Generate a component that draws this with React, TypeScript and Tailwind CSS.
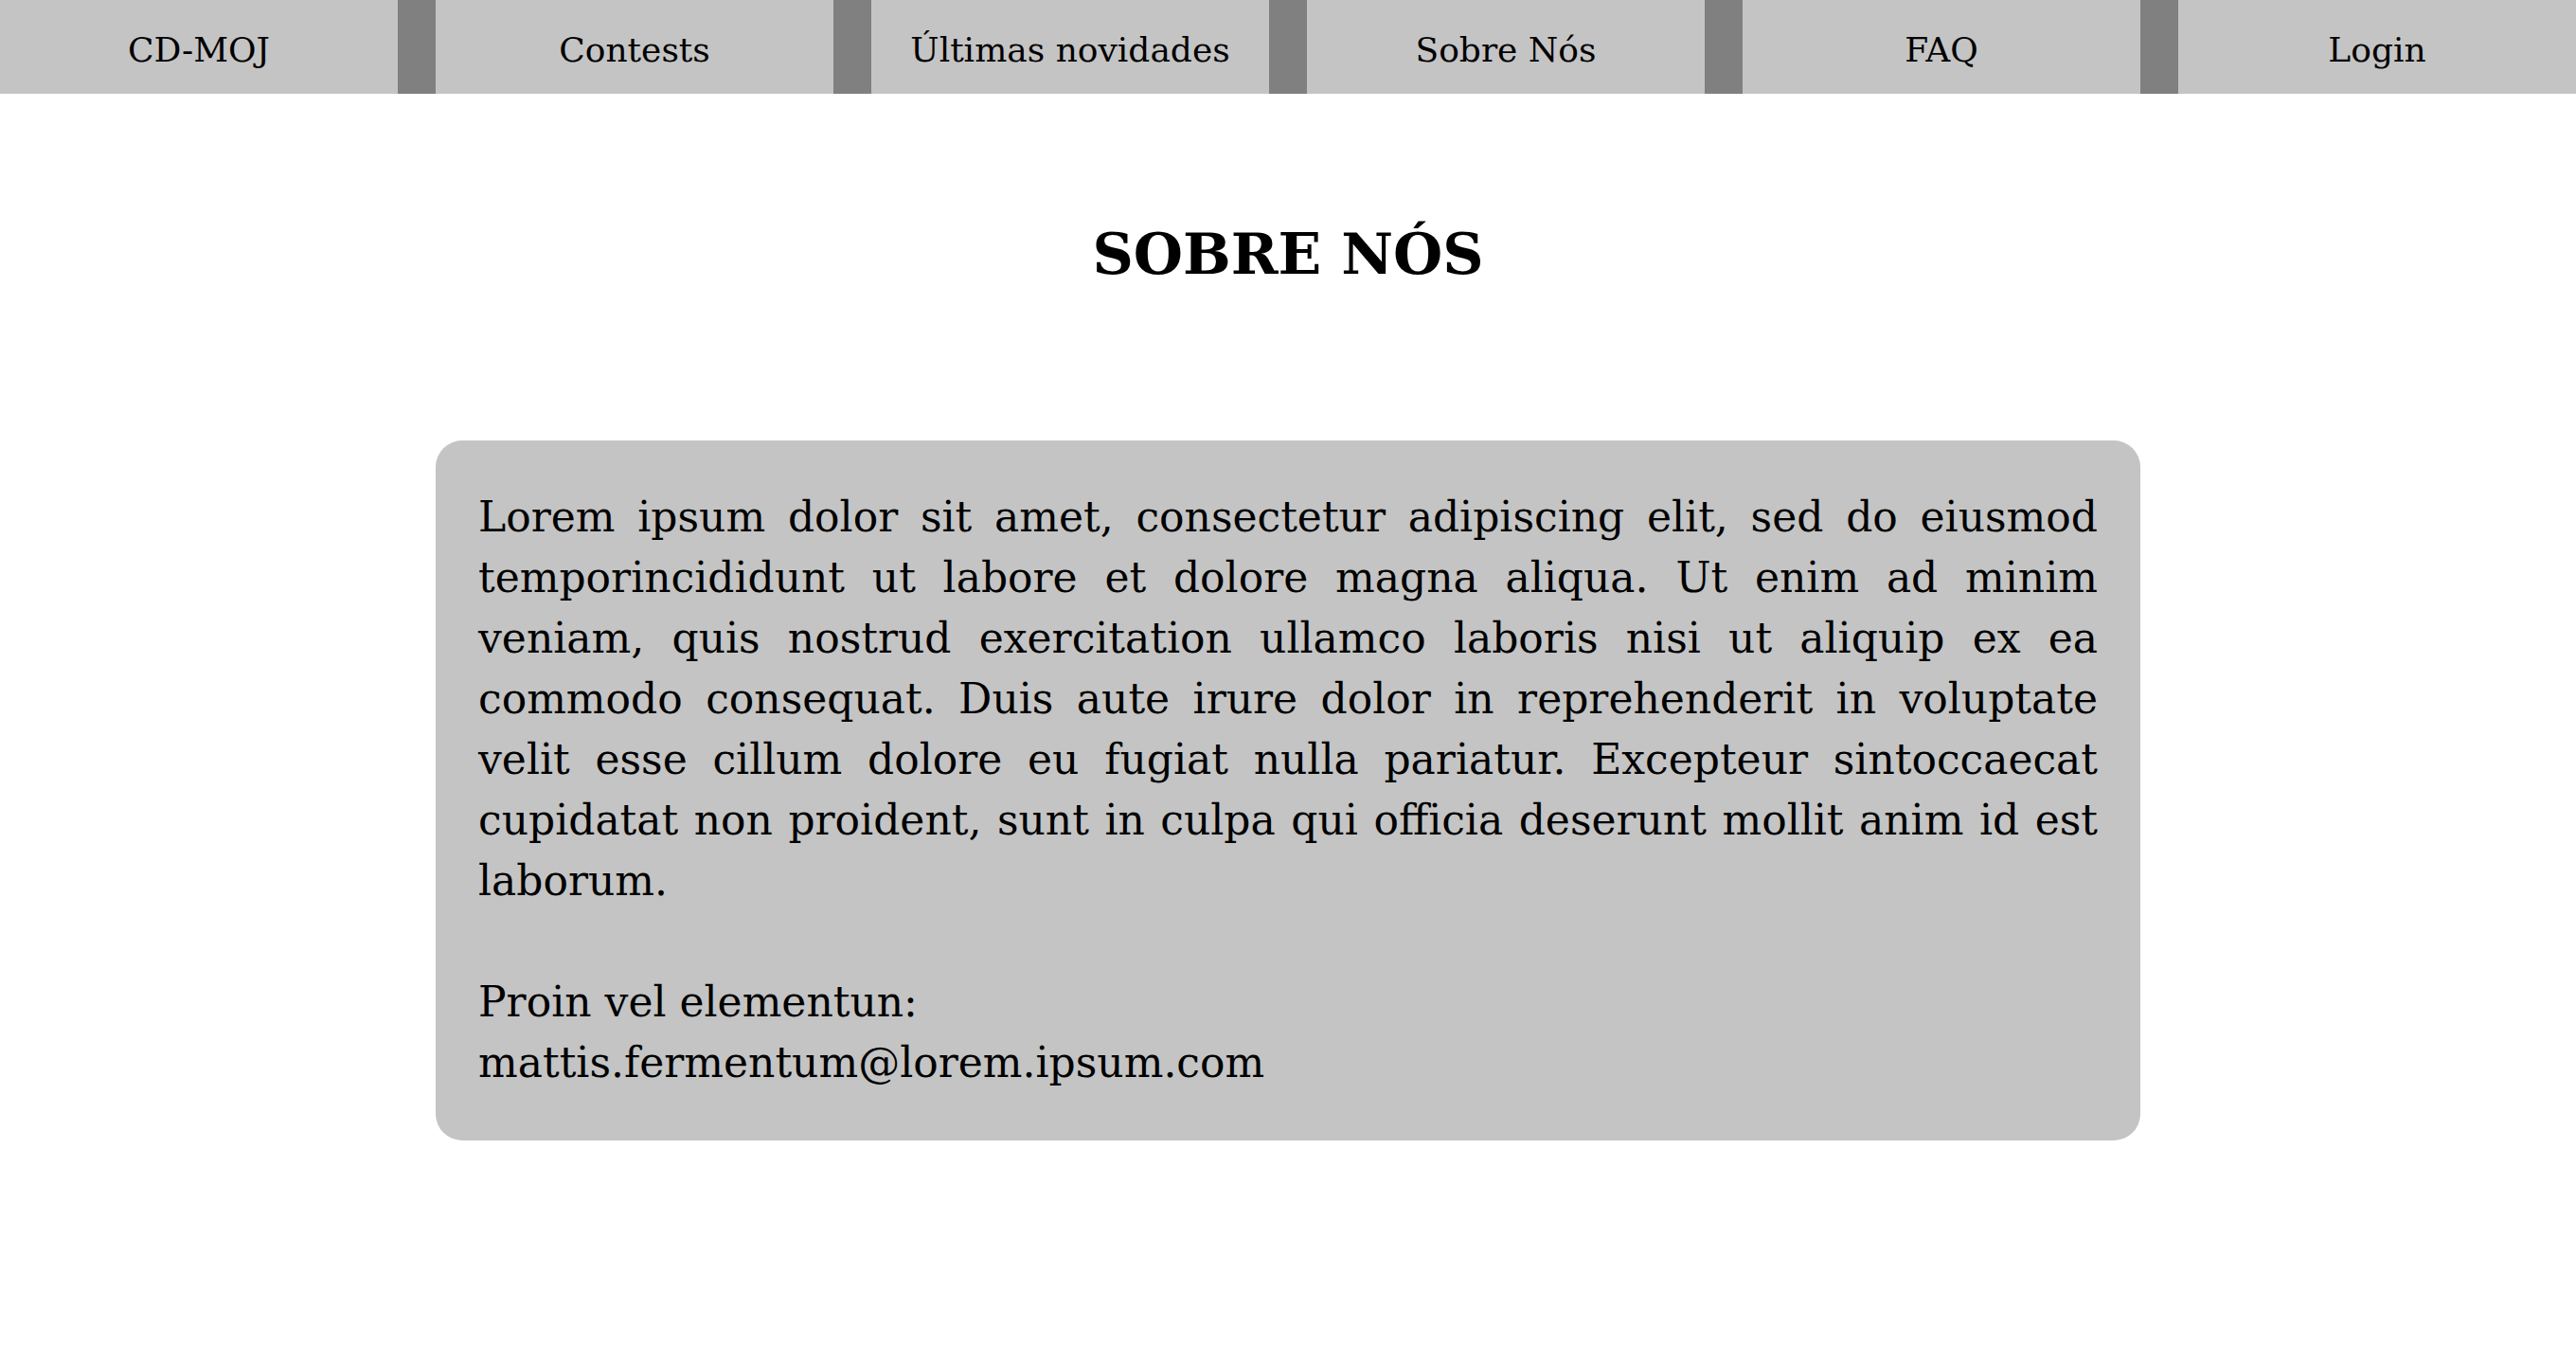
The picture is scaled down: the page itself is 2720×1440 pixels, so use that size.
import React from "react";

const navItems = ["CD-MOJ", "Contests", "Últimas novidades", "Sobre Nós", "FAQ", "Login"];

const lines = [
  "Lorem ipsum dolor sit amet, consectetur adipiscing elit, sed do eiusmod",
  "temporincididunt ut labore et dolore magna aliqua. Ut enim ad minim",
  "veniam, quis nostrud exercitation ullamco laboris nisi ut aliquip ex ea",
  "commodo consequat. Duis aute irure dolor in reprehenderit in voluptate",
  "velit esse cillum dolore eu fugiat nulla pariatur. Excepteur sintoccaecat",
  "cupidatat non proident, sunt in culpa qui officia deserunt mollit anim id est",
];

export default function App() {
  return (
    <div className="min-h-[1440px] w-full bg-white text-black [font-family:'DejaVu_Serif',serif]">
      <nav className="flex h-[99px] w-full">
        {navItems.map((item, i) => (
          <React.Fragment key={item}>
            {i > 0 && <div className="w-[40px] shrink-0 bg-[#808080]" />}
            <div className="flex flex-1 items-center justify-center bg-[#c4c4c4] pt-[7px] text-[36px] leading-none">
              {item}
            </div>
          </React.Fragment>
        ))}
      </nav>
      <h1 className="mt-[130px] text-center text-[60px] font-bold leading-[78px]">SOBRE NÓS</h1>
      <div className="mx-auto mt-[158px] w-[1800px] rounded-[28px] bg-[#c4c4c4] px-[45px] pt-[49px] pb-[50px] text-[44px] leading-[64px]">
        <p>
          {lines.map((l) => (
            <span key={l} className="block whitespace-nowrap text-justify [text-align-last:justify]">
              {l}
            </span>
          ))}
          <span className="block">laborum.</span>
        </p>
        <p className="mt-[64px]">Proin vel elementun:</p>
        <p>mattis.fermentum@lorem.ipsum.com</p>
      </div>
    </div>
  );
}
